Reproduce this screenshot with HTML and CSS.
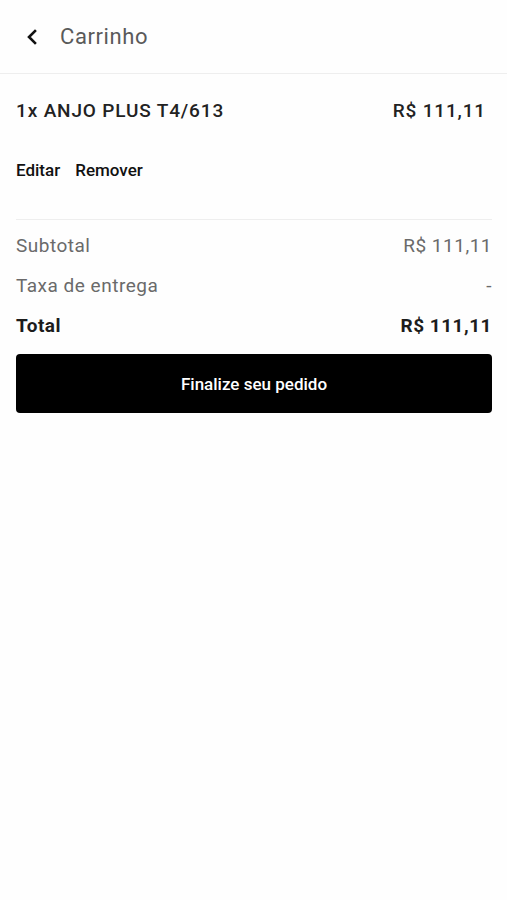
FILE: index.html
```html
<!DOCTYPE html>
<html lang="pt-BR">
<head>
    <meta charset="UTF-8">
    <meta name="viewport" content="width=device-width, initial-scale=1.0">
    <title>Carrinho</title>
    <link rel="stylesheet" href="styles.css">
</head>
<body>
    <header class="header">
        <button class="back-btn" aria-label="Voltar">
            <svg width="14" height="16" viewBox="0 0 14 16">
                <path d="M10 2 L4 8 L10 14" fill="none" stroke="#111" stroke-width="2.6" stroke-linecap="square"/>
            </svg>
        </button>
        <div class="header-title">Carrinho</div>
    </header>

    <div class="content">
        <div class="item">
            <div class="item-row">
                <span class="item-name">1x ANJO PLUS T4/613</span>
                <span class="item-price">R$ 111,11</span>
            </div>
            <div class="item-actions">
                <a href="#">Editar</a>
                <a href="#">Remover</a>
            </div>
        </div>

        <div class="summary">
            <div class="summary-row">
                <span>Subtotal</span>
                <span>R$ 111,11</span>
            </div>
            <div class="summary-row">
                <span>Taxa de entrega</span>
                <span>-</span>
            </div>
            <div class="summary-row total">
                <span>Total</span>
                <span>R$ 111,11</span>
            </div>
        </div>

        <button class="submit-btn">Finalize seu pedido</button>
    </div>
</body>
</html>
```

FILE: styles.css
```css
body {
    font-family: Roboto, 'Liberation Sans', sans-serif;
    background-color: #fefefe;
    color: #1c1c1c;
    margin: 0;
}

.header {
    height: 73px;
    display: flex;
    align-items: center;
    border-bottom: 1px solid #eeeeee;
    padding-left: 25px;
}

.back-btn {
    background: none;
    border: none;
    padding: 0;
    width: 35px;
    display: flex;
    align-items: center;
    cursor: pointer;
}

.header-title {
    font-size: 22px;
    color: #5a5a5a;
    letter-spacing: 0.6px;
}

.content {
    padding: 0 15px 0 16px;
}

.item {
    border-bottom: 1px solid #eeeeee;
}

.item-row {
    display: flex;
    justify-content: space-between;
    align-items: center;
    padding: 25px 6px 0 0;
    font-size: 19px;
    font-weight: 500;
    letter-spacing: 0.85px;
    color: #222;
}

.item-actions {
    display: flex;
    gap: 15px;
    padding: 38px 0 39px;
}

.item-actions a {
    font-size: 17px;
    font-weight: 500;
    color: #111;
    text-decoration: none;
}

.summary {
    padding-top: 5px;
}

.summary-row {
    display: flex;
    justify-content: space-between;
    font-size: 19px;
    font-weight: 400;
    color: #6a6a6a;
    height: 40px;
    align-items: center;
    letter-spacing: 0.5px;
}

.summary-row.total {
    font-weight: 700;
    color: #1c1c1c;
    letter-spacing: 0.5px;
}

.submit-btn {
    width: 100%;
    height: 59px;
    margin-top: 9px;
    background-color: #000;
    border: none;
    border-radius: 4px;
    color: #fff;
    font-family: Roboto, 'Liberation Sans', sans-serif;
    font-weight: 500;
    font-size: 17px;
    cursor: pointer;
}
```
